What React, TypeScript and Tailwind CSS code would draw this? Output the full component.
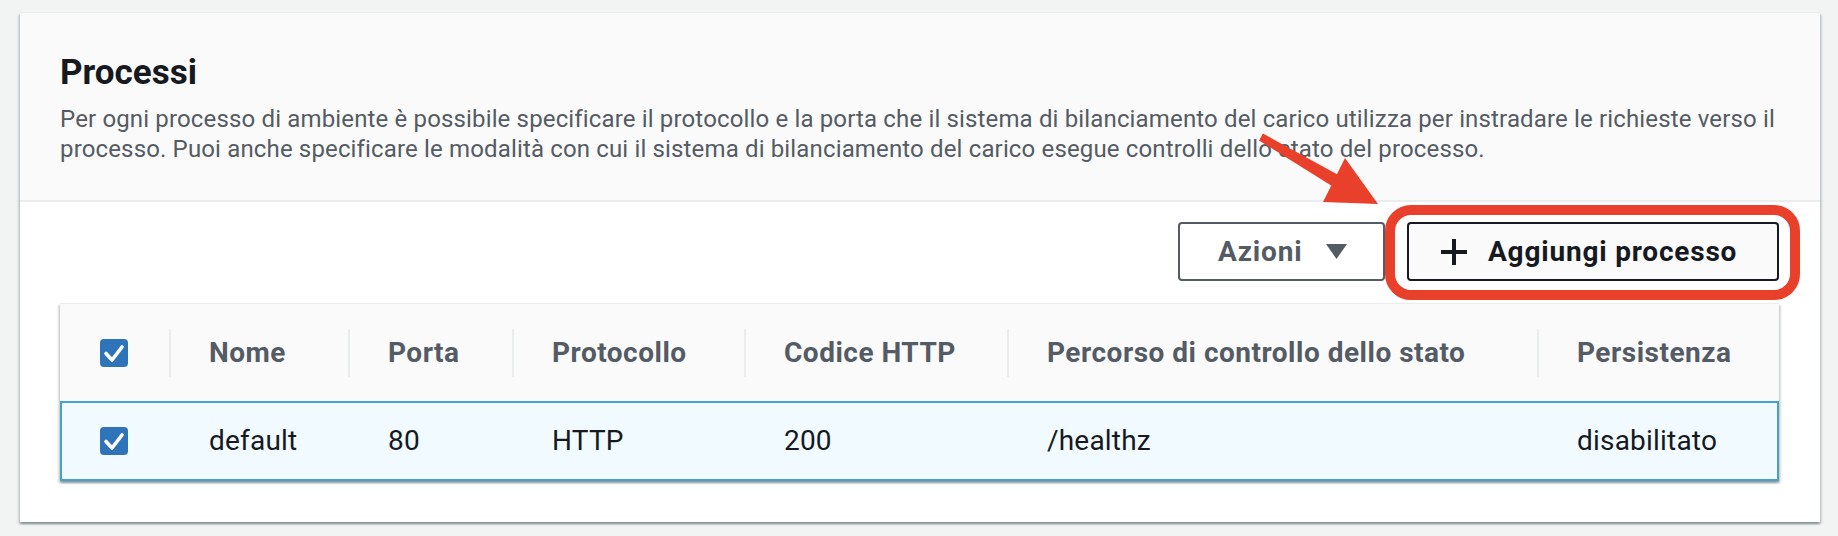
import React from "react";

const font = "font-['Roboto','Liberation_Sans',sans-serif]";

type Column = { label: string; value: string };

const columns: Column[] = [
  { label: "Nome", value: "default" },
  { label: "Porta", value: "80" },
  { label: "Protocollo", value: "HTTP" },
  { label: "Codice HTTP", value: "200" },
  { label: "Percorso di controllo dello stato", value: "/healthz" },
  { label: "Persistenza", value: "disabilitato" },
];

const gridCols =
  "grid grid-cols-[109px_179px_164px_232px_263px_530px_1fr]";

function Checkbox() {
  return (
    <span className="flex h-[28px] w-[28px] items-center justify-center rounded-[4px] bg-[#2f74b8]">
      <svg width="28" height="28" viewBox="0 0 28 28" fill="none">
        <path
          d="M6 14.5l6 6.5 10-13"
          stroke="white"
          strokeWidth="3.6"
          strokeLinecap="round"
          strokeLinejoin="round"
        />
      </svg>
    </span>
  );
}

function Annotation() {
  return (
    <>
      {/* red highlight round the button */}
      <div className="pointer-events-none absolute -top-[17px] -right-[21px] -bottom-[19px] -left-[22px] rounded-[26px] border-[10px] border-[#e8402a]" />
      {/* arrow */}
      <svg
        className="pointer-events-none absolute -left-[160px] -top-[100px] overflow-visible"
        width="160"
        height="100"
        viewBox="0 0 160 100"
      >
        <polygon
          points="12,18.4 16,11.6 92.3,53.4 85.7,64.6"
          fill="#e8402a"
        />
        <polygon points="76,80 98,36 131,82" fill="#e8402a" />
      </svg>
    </>
  );
}

export default function App() {
  return (
    <div
      className={`${font} h-[536px] w-full bg-[#f2f3f3] pt-[13px] pl-[20px] pr-[18px]`}
    >
      <div className="bg-white pb-[41px] shadow-[0_2px_2px_0_rgba(0,28,36,0.3),2px_2px_2px_0_rgba(0,28,36,0.12),-2px_2px_2px_0_rgba(0,28,36,0.12),0_-1px_0_0_#eaeded]">
        <div className="border-b-2 border-[#eaeded] bg-[#fafafa] px-[40px] pt-[39px] pb-[36px]">
          <h2 className="text-[35px] leading-[42px] font-bold text-[#16191f]">
            Processi
          </h2>
          <p className="mt-[10px] text-[24px] leading-[30px] tracking-[0.15px] text-[#545b64]">
            <span className="block whitespace-nowrap">
              Per ogni processo di ambiente è possibile specificare il
              protocollo e la porta che il sistema di bilanciamento del carico
              utilizza per instradare le richieste verso il
            </span>
            <span className="block whitespace-nowrap">
              processo. Puoi anche specificare le modalità con cui il sistema
              di bilanciamento del carico esegue controlli dello stato del
              processo.
            </span>
          </p>
        </div>

        <div className="pl-[40px] pr-[41px]">
          <div className="flex justify-end gap-[22px] pt-[20px]">
            <button className="flex h-[59px] w-[207px] items-center rounded-[4px] border-2 border-[#545b64] bg-white pl-[38px] text-[28px] font-bold tracking-[0.8px] text-[#545b64]">
              Azioni
              <svg
                className="ml-[24px]"
                width="21"
                height="15"
                viewBox="0 0 21 15"
              >
                <polygon points="0,0 21,0 10.5,15" fill="#545b64" />
              </svg>
            </button>
            <div className="relative">
              <button className="flex h-[59px] w-[372px] items-center rounded-[4px] border-2 border-[#16191f] bg-[#fafafa] pl-[31px] text-[28px] font-bold tracking-[0.8px] text-[#16191f]">
                <svg width="28" height="28" viewBox="0 0 28 28">
                  <path
                    d="M14 1v26M1 14h26"
                    stroke="#16191f"
                    strokeWidth="4"
                  />
                </svg>
                <span className="ml-[20px]">Aggiungi processo</span>
              </button>
              <Annotation />
            </div>
          </div>

          <div className="mt-[22px] border-t border-[#eaeded] bg-white shadow-[0_2px_2px_0_rgba(0,28,36,0.3),2px_2px_2px_0_rgba(0,28,36,0.12),-2px_2px_2px_0_rgba(0,28,36,0.12)]">
            <div
              className={`${gridCols} h-[97px] bg-[#fafafa] text-[28px] font-bold tracking-[0.5px] text-[#545b64]`}
            >
              <div className="flex items-center pl-[40px]">
                <Checkbox />
              </div>
              {columns.map((c) => (
                <div key={c.label} className="flex items-center">
                  <span className="h-[48px] w-[2px] bg-[#eaeded]" />
                  <span className="pl-[38px] whitespace-nowrap">{c.label}</span>
                </div>
              ))}
            </div>
            <div
              className={`${gridCols} h-[80px] bg-[#f1faff] text-[28px] tracking-[0.2px] text-[#16191f] shadow-[inset_0_0_0_2px_#44a3cd]`}
            >
              <div className="flex items-center pl-[40px]">
                <Checkbox />
              </div>
              {columns.map((c) => (
                <div key={c.label} className="flex items-center pl-[40px]">
                  {c.value}
                </div>
              ))}
            </div>
          </div>
        </div>
      </div>
    </div>
  );
}
